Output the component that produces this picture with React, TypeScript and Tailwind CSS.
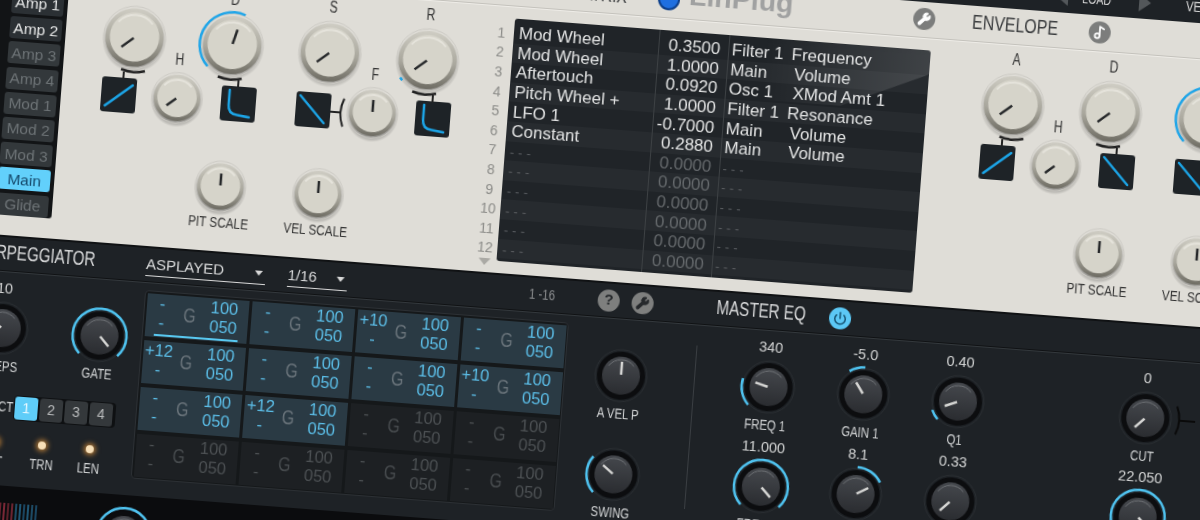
import { Music2, Power, Wrench } from "lucide-react";

// no condensed font is installed, so narrow labels are squeezed sideways
const narrow = "inline-block scale-x-[0.76] [font-family:'Liberation_Sans',Arial,sans-serif]";
const BLUE = "#4fc3f0";

function polar(c: number, r: number, deg: number) {
  const a = (deg * Math.PI) / 180;
  return `${c + r * Math.sin(a)} ${c - r * Math.cos(a)}`;
}

function arcPath(c: number, r: number, from: number, to: number) {
  const large = to - from > 180 ? 1 : 0;
  return `M${polar(c, r, from)} A${r} ${r} 0 ${large} 1 ${polar(c, r, to)}`;
}

function LightKnob({ size, pointer, arc }: { size: number; pointer: number; arc?: [number, number] }) {
  const c = size / 2;
  const R = size * 0.485;
  return (
    <svg width={size} height={size} className="overflow-visible block">
      <circle cx={c} cy={c + 3} r={R + 3} fill="url(#knobShadow)" />
      <circle cx={c} cy={c} r={R + 2} fill="none" stroke="#cdcbc5" strokeWidth="1" />
      <circle cx={c} cy={c} r={R} fill="url(#knobBody)" />
      <circle cx={c} cy={c - 0.5} r={R * 0.85} fill="#d6d4ca" />
      <path d={arcPath(c, R * 0.77, -50, 50)} fill="none" stroke="#eeede6" strokeWidth="2" opacity="0.6" />
      {arc && <path d={arcPath(c, R + 3.5, arc[0], arc[1])} fill="none" stroke="#1fa5e8" strokeWidth="2.5" />}
      <path d={`M${polar(c, 1, pointer)} L${polar(c, size * 0.27, pointer)}`} stroke="#26282a" strokeWidth="2.5" />
    </svg>
  );
}

function DarkKnob({ pointer, arc }: { pointer: number; arc?: [number, number] }) {
  return (
    <svg width={56} height={56} className="overflow-visible block">
      <circle cx="28" cy="28" r="26" fill="none" stroke="#2b2f33" strokeWidth="1" />
      <circle cx="28" cy="28" r="24" fill="#0c0d0f" />
      <circle cx="28" cy="28" r="19" fill="url(#darkFace)" />
      <path d={arcPath(28, 16, -55, 50)} fill="none" stroke="#6d7074" strokeWidth="1" />
      {arc && <path d={arcPath(28, 27, arc[0], arc[1])} fill="none" stroke={BLUE} strokeWidth="2.5" />}
      <path d={`M${polar(28, 1, pointer)} L${polar(28, 14, pointer)}`} stroke="#d6d6d4" strokeWidth="2.5" />
    </svg>
  );
}

function Curve({ kind }: { kind: "up" | "down" | "hook" }) {
  const d = kind === "up" ? "M4.5 29 L31 7" : kind === "down" ? "M4 4 L29 30" : "M8 4 V19 Q8 28 17 28.5 L29 30";
  return (
    <svg width="35" height="35" className="block rounded-[3px] bg-[#1e2327]">
      <path d={d} fill="none" stroke="#1ca4e6" strokeWidth="2.5" strokeLinecap="round" />
    </svg>
  );
}

function Bracket({ side }: { side: "left" | "right" }) {
  const stem = side === "left" ? 4 : 22;
  return (
    <svg
      width="26"
      height="11"
      className={side === "left" ? "absolute -top-[10px] left-[17px]" : "absolute -top-[10px] -left-[6px]"}
    >
      <path d="M1 1.5 Q13 5.5 25 2" fill="none" stroke="#222" strokeWidth="2.5" />
      <path d={`M${stem} 4 V11`} stroke="#222" strokeWidth="2" />
    </svg>
  );
}

function CurveCol({ kind, bracket, ml }: { kind: "up" | "down" | "hook"; bracket?: "left" | "right"; ml: string }) {
  return (
    <div className={`relative mt-[30px] h-[35px] w-[35px] shrink-0 ${ml}`}>
      {bracket && <Bracket side={bracket} />}
      <Curve kind={kind} />
    </div>
  );
}

function Envelope({
  second,
  third,
  decayArc,
  sustainArc,
  releaseArc,
}: {
  second: "hook" | "down";
  third: "down";
  decayArc?: [number, number];
  sustainArc?: [number, number];
  releaseArc?: [number, number];
}) {
  const decayPointer = decayArc ? 15 : -130;
  const sustainPointer = sustainArc ? 15 : -130;
  const top = [
    { label: "A", pointer: -130 },
    { label: "D", pointer: decayPointer, arc: decayArc },
    { label: "S", pointer: sustainPointer, arc: sustainArc },
    { label: "R", pointer: -130, arc: releaseArc },
  ];
  return (
    <div className="flex w-[392px] shrink-0 flex-col pt-[8px]">
      <div className="grid grid-cols-[repeat(4,98px)]">
        {top.map((k) => (
          <div key={k.label} className="flex flex-col items-center">
            <div className={`h-4 text-[16px] leading-4 text-[#333] ${narrow}`}>{k.label}</div>
            <div className="mt-[7px]">
              <LightKnob size={60} pointer={k.pointer} arc={k.arc} />
            </div>
          </div>
        ))}
      </div>
      <div className="-mt-[19px] flex h-[70px]">
        <CurveCol kind="up" bracket="left" ml="ml-[20px]" />
        <div className="ml-[17px] flex w-[48px] shrink-0 flex-col items-center">
          <div className={`h-4 text-[16px] leading-4 text-[#333] ${narrow}`}>H</div>
          <div className="mt-[6px]">
            <LightKnob size={48} pointer={-130} />
          </div>
        </div>
        <CurveCol kind={second} bracket="right" ml="ml-[20px]" />
        <div className="relative ml-[40px] mt-[30px] h-[35px] w-[35px] shrink-0">
          <Curve kind={third} />
          <svg width="16" height="30" className="absolute left-full top-[3px]">
            <path d="M0 15 H11" stroke="#222" strokeWidth="2" />
            <path d="M13 1 Q7 15 13 29" fill="none" stroke="#222" strokeWidth="2" />
          </svg>
        </div>
        <div className="ml-[17.5px] flex w-[48px] shrink-0 flex-col items-center">
          <div className={`h-4 text-[16px] leading-4 text-[#333] ${narrow}`}>F</div>
          <div className="mt-[6px]">
            <LightKnob size={48} pointer={0} />
          </div>
        </div>
        <CurveCol kind="hook" bracket="right" ml="ml-[19px]" />
      </div>
      <div className="ml-[97px] mt-[37px] flex">
        {["PIT SCALE", "VEL SCALE"].map((label) => (
          <div key={label} className="flex w-[98px] flex-col items-center">
            <LightKnob size={48} pointer={0} />
            <div className={`mt-[4px] h-4 whitespace-nowrap text-[15.5px] leading-4 text-[#333] ${narrow}`}>{label}</div>
          </div>
        ))}
      </div>
    </div>
  );
}

const sources = [
  ["Amp 1", "on"],
  ["Amp 2", "on"],
  ["Amp 3", "off"],
  ["Amp 4", "off"],
  ["Mod 1", "off"],
  ["Mod 2", "off"],
  ["Mod 3", "off"],
  ["Main", "active"],
  ["Glide", "off"],
];

function SourceList() {
  return (
    <div className="mt-[56.5px] flex h-[227px] w-[68px] shrink-0 flex-col gap-[3.2px] rounded-br-[3px] bg-[#121416] pl-[12px] pr-[4px] pt-[3px]">
      {sources.map(([label, state]) => (
        <div
          key={label}
          className={
            state === "active"
              ? "flex h-[22px] shrink-0 items-center justify-center rounded-[3px] bg-[#62d0fb] text-[15.5px] text-[#15496b]"
              : state === "on"
                ? "flex h-[22px] shrink-0 items-center justify-center rounded-[3px] bg-[#2b3034] text-[15.5px] text-[#e6e7e7]"
                : "flex h-[22px] shrink-0 items-center justify-center rounded-[3px] bg-[#33383b] text-[15.5px] text-[#6d7376]"
          }
        >
          {label}
        </div>
      ))}
    </div>
  );
}

const matrix = [
  ["Mod Wheel", "0.3500", "Filter 1", "Frequency", false],
  ["Mod Wheel", "1.0000", "Main", "Volume", true],
  ["Aftertouch", "0.0920", "Osc 1", "XMod Amt 1", true],
  ["Pitch Wheel +", "1.0000", "Filter 1", "Resonance", false],
  ["LFO 1", "-0.7000", "Main", "Volume", true],
  ["Constant", "0.2880", "Main", "Volume", true],
] as const;

function Matrix() {
  const rows = Array.from({ length: 12 }, (_, i) => matrix[i]);
  return (
    <>
      <div className="mt-[18.5px] flex w-[19px] shrink-0 flex-col items-center text-[14px] text-[#8b8b88]">
        {rows.map((_, i) => (
          <div key={i} className="flex h-[19.6px] items-center leading-none">
            {i + 1}
          </div>
        ))}
        <div className="mt-[1px] h-0 w-0 border-x-[6px] border-t-[7px] border-x-transparent border-t-[#aaa9a4]" />
      </div>
      <div className="relative ml-[3px] mt-[13px] h-[243px] w-[416.5px] shrink-0 overflow-hidden rounded-[3px] bg-[#202428] pt-[5.5px]">
        {rows.map((row, i) => (
          <div
            key={i}
            className={
              i % 2 === 0
                ? "flex h-[19.6px] items-center bg-[#202428] text-[17px] leading-none text-[#e3e4e4]"
                : "flex h-[19.6px] items-center bg-[#272b2f] text-[17px] leading-none text-[#e3e4e4]"
            }
          >
            <div className="w-[145px] shrink-0 whitespace-nowrap pl-[5px]">
              {row ? row[0] : <span className="text-[13px] tracking-[4px] text-[#5c6063]">---</span>}
            </div>
            <div className={row ? "w-[62px] shrink-0 text-right" : "w-[62px] shrink-0 text-right text-[#666a6d]"}>
              {row ? row[1] : "0.0000"}
            </div>
            <div className="w-[71.5px] shrink-0 whitespace-nowrap pl-[11.5px]">
              {row ? row[2] : <span className="text-[13px] tracking-[4px] text-[#5c6063]">---</span>}
            </div>
            <div className={row && row[4] ? "whitespace-nowrap pl-[4px]" : "whitespace-nowrap"}>{row ? row[3] : ""}</div>
          </div>
        ))}
        <div className="absolute bottom-0 left-[145px] top-0 w-px bg-[#3d4144]" />
        <div className="absolute bottom-0 left-[215px] top-0 w-px bg-[#3d4144]" />
        <svg width="416" height="70" className="absolute right-0 top-0">
          <polygon points="416,0 416,24 330,62 250,62 250,0" fill="url(#gloss)" />
        </svg>
      </div>
    </>
  );
}

function RoundIcon({ children, className }: { children: React.ReactNode; className: string }) {
  return <div className={`flex h-[22px] w-[22px] shrink-0 items-center justify-center rounded-full ${className}`}>{children}</div>;
}

function LightPanel() {
  return (
    <div className="relative flex h-[303.5px] shrink-0 bg-[#dfddd7]">
      <div className="absolute inset-x-0 top-[35px] h-[2px] border-t border-[#c4c2bc] bg-[#eeece7]" />
      <SourceList />
      <div className="flex min-w-0 flex-1 flex-col">
        <div className="flex h-[35px] shrink-0 items-center text-[#3a3c3e]">
          <div className="ml-[482px] flex w-[75px] shrink-0 justify-end">
            <span className={`origin-right text-[20.5px] ${narrow}`}>MATRIX</span>
          </div>
          <div className="ml-[31px] h-[22px] w-[22px] shrink-0 rounded-full border-2 border-[#0d3f8a] bg-[#1f6fe0]" />
          <div className="mb-[12px] ml-[9px] w-[225px] shrink-0 text-[28.5px] font-bold leading-none text-[#a0a1a1]">LinPlug</div>
          <RoundIcon className="bg-[#7c7d7c] text-white">
            <Wrench size={14} fill="white" />
          </RoundIcon>
          <div className="ml-[37px] w-[87px] shrink-0 whitespace-nowrap">
            <span className={`origin-left text-[21px] leading-none ${narrow}`}>ENVELOPE</span>
          </div>
          <RoundIcon className="ml-[30px] bg-[#7c7d7c] text-white">
            <Music2 size={14} strokeWidth={3} />
          </RoundIcon>
        </div>
        <div className="flex">
          <div className="ml-[20px] shrink-0">
            <Envelope second="hook" third="down" decayArc={[-135, 20]} releaseArc={[-133, -127]} />
          </div>
          <div className="w-[13px] shrink-0" />
          <div className="flex shrink-0">
            <Matrix />
          </div>
          <div className="ml-[37.5px] shrink-0">
            <Envelope second="down" third="down" sustainArc={[-135, 20]} />
          </div>
        </div>
      </div>
    </div>
  );
}

function TopStrip() {
  return (
    <div className="flex h-[30.5px] shrink-0 items-center bg-[#1e2226] text-[14px] text-[#d8d8d8]">
      <div className="ml-[1053px] h-0 w-0 shrink-0 border-y-[9px] border-r-[12px] border-y-transparent border-r-[#53575a]" />
      <div className="ml-[14px] w-[50px] shrink-0">
        <span className={`origin-left ${narrow}`}>LOAD</span>
      </div>
      <div className="ml-[7px] h-0 w-0 shrink-0 border-y-[9px] border-l-[12px] border-y-transparent border-l-[#53575a]" />
      <div className="ml-[35px] shrink-0 whitespace-nowrap text-[15px]">
        <span className={`origin-left ${narrow}`}>VEL SCALE</span>
      </div>
    </div>
  );
}

function KnobCol({
  value,
  label,
  pointer,
  arc,
  children,
}: {
  value?: string;
  label: string;
  pointer: number;
  arc?: [number, number];
  children?: React.ReactNode;
}) {
  return (
    <div className="relative flex w-[95px] shrink-0 flex-col items-center">
      <div className="h-[18px] whitespace-nowrap text-[14.5px] leading-[18px] text-[#d3d4d4]">{value}</div>
      <div className="relative mt-[3px]">
        <DarkKnob pointer={pointer} arc={arc} />
        {children}
      </div>
      <div className={`mt-[2px] h-4 whitespace-nowrap text-[15px] leading-4 text-[#d3d5d6] ${narrow}`}>{label}</div>
    </div>
  );
}

type Step = { oct: string; on: boolean };

const steps: Step[] = [
  { oct: "-", on: true },
  { oct: "-", on: true },
  { oct: "+10", on: true },
  { oct: "-", on: true },
  { oct: "+12", on: true },
  { oct: "-", on: true },
  { oct: "-", on: true },
  { oct: "+10", on: true },
  { oct: "-", on: true },
  { oct: "+12", on: true },
  ...Array.from({ length: 6 }, () => ({ oct: "-", on: false })),
];

function StepCell({ step, first }: { step: Step; first: boolean }) {
  return (
    <div
      className={
        step.on
          ? "relative flex h-[43px] bg-[#2a3a44] text-[16.5px] leading-[19.5px] text-[#5cbfe9]"
          : "relative flex h-[43px] bg-[#1d2023] text-[16.5px] leading-[19.5px] text-[#4d5154]"
      }
    >
      <div className="w-[32px] shrink-0 text-center">
        <div>{step.oct}</div>
        <div>-</div>
      </div>
      <div className="flex h-[39px] w-[24px] shrink-0 items-center justify-center">
        <span className={step.on ? `text-[21px] text-[#69737a] ${narrow}` : `text-[21px] text-[#474b4e] ${narrow}`}>G</span>
      </div>
      <div className="ml-[8px] w-[28px] text-center">
        <div>100</div>
        <div>050</div>
      </div>
      {first && <div className="absolute bottom-[1px] left-[9px] h-[2px] w-[84px] bg-[#58c8f0]" />}
    </div>
  );
}

function StepGrid() {
  return (
    <div className="grid h-[189px] w-[425px] shrink-0 grid-cols-4 gap-x-[3px] gap-y-[4px] rounded-[4px] border border-[#2c3034] bg-[#15181a] p-[1.5px]">
      {steps.map((s, i) => (
        <StepCell key={i} step={s} first={i === 0} />
      ))}
    </div>
  );
}

function ArpControls() {
  return (
    <div className="flex w-[167px] shrink-0 flex-col">
      <div className="-ml-[22px] flex">
        <div className="flex w-[98px] shrink-0 justify-center">
          <KnobCol value="10" label="STEPS" pointer={-55} />
        </div>
        <div className="flex w-[98px] shrink-0 justify-center">
          <KnobCol label="GATE" pointer={137} arc={[-135, 135]} />
        </div>
      </div>
      <div className="mt-[20px] flex items-center">
        <div className="flex w-[44px] shrink-0 justify-end whitespace-nowrap text-[15px]">
          <span className={`origin-right text-[#d3d5d6] ${narrow}`}>SELECT</span>
        </div>
        <div className="ml-[1px] flex gap-[2px] rounded-[4px] bg-[#0e1012] p-px pr-[3px]">
          {["1", "2", "3", "4"].map((n) => (
            <div
              key={n}
              className={
                n === "1"
                  ? "flex h-[23px] w-[23px] items-center justify-center rounded-[3px] bg-[#5fcdf8] text-[14px] text-[#eaf9ff]"
                  : "flex h-[23px] w-[23px] items-center justify-center rounded-[3px] bg-[#34383b] text-[14px] text-[#b9bbbc]"
              }
            >
              {n}
            </div>
          ))}
        </div>
      </div>
      <div className="ml-[5px] mt-[19px] flex">
        {["PIT", "TRN", "LEN"].map((label) => (
          <div key={label} className="flex w-[47.5px] flex-col items-center">
            <div className="h-[8px] w-[8px] rounded-full bg-[#f7dfb8] shadow-[0_0_5px_2px_rgba(226,150,60,0.75)]" />
            <div className={`mt-[7px] h-4 text-[15px] leading-4 text-[#d3d5d6] ${narrow}`}>{label}</div>
          </div>
        ))}
      </div>
    </div>
  );
}

function DarkPanel() {
  return (
    <div className="flex h-[250px] shrink-0 flex-col border-t-2 border-[#101214] bg-[#1e2226]">
      <div className="flex h-[33px] shrink-0 items-center text-[#d9dadb]">
        <div className="ml-[5px] w-[113px] shrink-0 whitespace-nowrap">
          <span className={`origin-left text-[20px] leading-none ${narrow}`}>ARPEGGIATOR</span>
        </div>
        <div className="ml-[48px] flex h-[22px] w-[120px] shrink-0 items-center justify-between border-b border-[#d8d8d8] pr-[3px]">
          <span className="text-[15px]">ASPLAYED</span>
          <span className="h-0 w-0 border-x-[4px] border-t-[5px] border-x-transparent border-t-[#d8d8d8]" />
        </div>
        <div className="ml-[22px] flex h-[22px] w-[60px] shrink-0 items-center justify-between border-b border-[#d8d8d8] pr-[3px]">
          <span className="text-[15px]">1/16</span>
          <span className="h-0 w-0 border-x-[4px] border-t-[5px] border-x-transparent border-t-[#d8d8d8]" />
        </div>
        <div className="ml-[182px] w-[37px] shrink-0 whitespace-nowrap">
          <span className={`origin-left text-[15px] text-[#8f9193] ${narrow}`}>1 -16</span>
        </div>
        <RoundIcon className="ml-[32px] bg-[#7e7f7e] text-[15px] font-bold text-[#26292c]">?</RoundIcon>
        <RoundIcon className="ml-[12px] bg-[#7e7f7e] text-[#26292c]">
          <Wrench size={14} fill="#26292c" />
        </RoundIcon>
        <div className="ml-[63px] w-[90px] shrink-0 whitespace-nowrap">
          <span className={`origin-left text-[20px] leading-none ${narrow}`}>MASTER EQ</span>
        </div>
        <RoundIcon className="ml-[23px] bg-[#5cc8f5] text-[#14506e]">
          <Power size={14} strokeWidth={2.5} />
        </RoundIcon>
      </div>
      <div className="h-[2px] shrink-0 border-t border-[#101214] bg-[#33383c]" />
      <div className="flex pt-[7px]">
        <ArpControls />
        <StepGrid />
        <div className="ml-[8px] flex shrink-0 flex-col gap-[4px]">
          <KnobCol label="A VEL P" pointer={0} />
          <KnobCol label="SWING" pointer={-52} arc={[-135, -52]} />
        </div>
        <div className="ml-[26px] mt-[13px] h-[164px] w-px shrink-0 bg-[#3a3e42]" />
        <div className="ml-[26px] grid shrink-0 grid-cols-[repeat(3,95px)] gap-y-[4px]">
          <KnobCol value="340" label="FREQ 1" pointer={-75} arc={[-135, -75]} />
          <KnobCol value="-5.0" label="GAIN 1" pointer={-35} arc={[-35, 0]} />
          <KnobCol value="0.40" label="Q1" pointer={-112} arc={[-135, -112]} />
          <KnobCol value="11.000" label="FREQ 2" pointer={135} arc={[-135, 135]} />
          <KnobCol value="8.1" label="GAIN 2" pointer={60} arc={[0, 60]} />
          <KnobCol value="0.33" label="Q2" pointer={-135} />
        </div>
        <div className="ml-[93px] mt-[2px] flex shrink-0 flex-col gap-[4px]">
          <KnobCol value="0" label="CUT" pointer={-135}>
            <svg width="22" height="30" className="absolute left-full top-[13px]">
              <path d="M3 1 Q9 15 3 29" fill="none" stroke="#0a0a0a" strokeWidth="2" />
              <path d="M6 15 H22" stroke="#0a0a0a" strokeWidth="2" />
            </svg>
          </KnobCol>
          <KnobCol value="22.050" label="HIGH" pointer={135} arc={[-135, 135]} />
        </div>
      </div>
    </div>
  );
}

const bars = ["#6b2330", "#7a2836", "#5c2029", "#6b2330", "#1d4a63", "#1f5573", "#1a4560", "#1f5573", "#1d4a63", "#1a4560"];

function BottomStrip() {
  return (
    <div className="flex flex-1 bg-[#0b0c0e]">
      <div className="ml-[38px] mt-[17px] flex h-[40px] gap-[2px]">
        {bars.map((c, i) => (
          <div key={i} className="w-[2px]" style={{ backgroundColor: c }} />
        ))}
      </div>
      <div className="ml-[60px] mt-[12px]">
        <DarkKnob pointer={0} arc={[-135, 135]} />
      </div>
    </div>
  );
}

export default function App() {
  return (
    <div className="h-[520px] w-[1200px] overflow-hidden bg-[#0b0c0e] text-[15px] [font-family:'Liberation_Sans',Arial,sans-serif]">
      <svg width="0" height="0" className="absolute">
        <defs>
          <linearGradient id="knobBody" x1="0" y1="0" x2="0" y2="1">
            <stop offset="0" stopColor="#cfcdc4" />
            <stop offset="0.55" stopColor="#a9a79d" />
            <stop offset="1" stopColor="#6e6c63" />
          </linearGradient>
          <radialGradient id="knobShadow">
            <stop offset="0.8" stopColor="#000" stopOpacity="0.3" />
            <stop offset="1" stopColor="#000" stopOpacity="0" />
          </radialGradient>
          <linearGradient id="darkFace" x1="0" y1="0" x2="0" y2="1">
            <stop offset="0" stopColor="#45484d" />
            <stop offset="1" stopColor="#2a2c30" />
          </linearGradient>
          <linearGradient id="gloss" x1="0" y1="0" x2="1" y2="0">
            <stop offset="0" stopColor="#fff" stopOpacity="0" />
            <stop offset="1" stopColor="#fff" stopOpacity="0.14" />
          </linearGradient>
        </defs>
      </svg>
      <div className="-mt-[100px] flex h-[640px] w-[1400px] origin-[0_100px] rotate-[4.4deg] flex-col blur-[0.35px]">
        <TopStrip />
        <LightPanel />
        <DarkPanel />
        <BottomStrip />
      </div>
    </div>
  );
}
